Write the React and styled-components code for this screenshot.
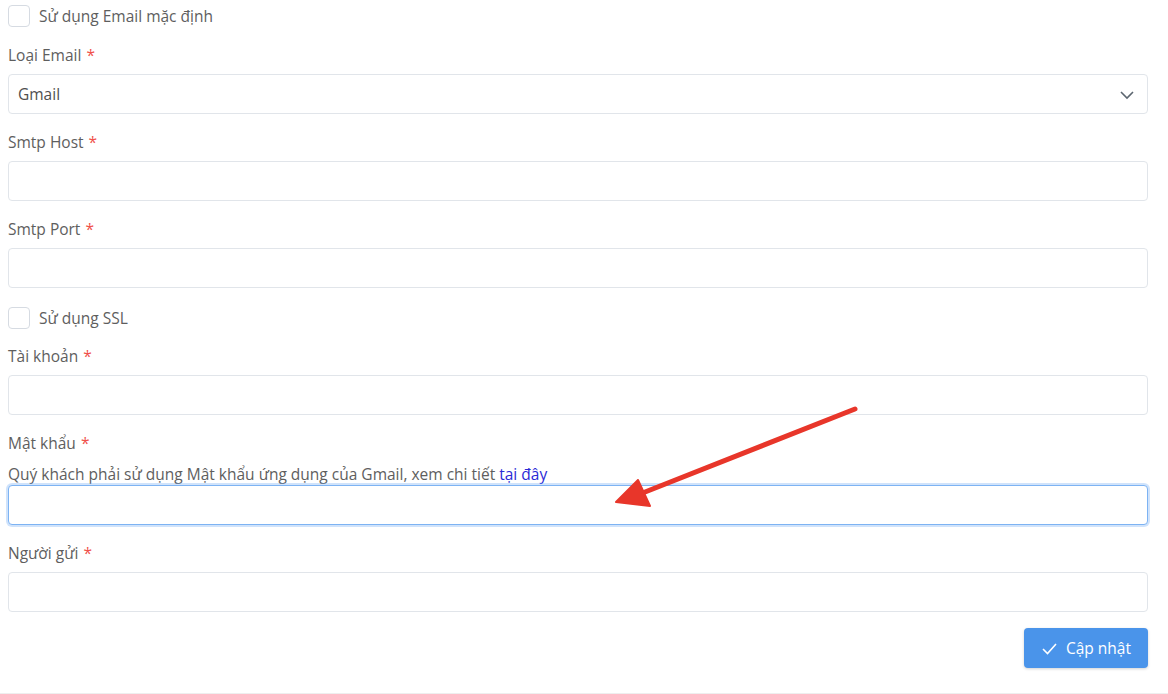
import React from 'react';
import styled, { createGlobalStyle } from 'styled-components';

const GlobalStyle = createGlobalStyle`
  html, body {
    margin: 0;
    padding: 0;
    background: #fff;
  }
  body {
    font-family: "Open Sans", "Noto Sans", sans-serif;
    font-size: 15.5px;
    color: #5e5e5e;
  }
`;

const Page = styled.div`
  position: relative;
  height: 694px;
  box-sizing: border-box;
  border-bottom: 1px solid #eeeeee;
  overflow: hidden;
`;

const Form = styled.form`
  width: 1140px;
  margin-left: 8px;
  padding-top: 4px;
  display: flex;
  flex-direction: column;
`;

const CheckRow = styled.label`
  display: flex;
  align-items: center;
  gap: 9px;
  height: 23px;
  margin-bottom: ${(p) => (p.$first ? '18px' : '17px')};
  cursor: pointer;
`;

const Box = styled.span`
  width: 22px;
  height: 22px;
  box-sizing: border-box;
  border: 1px solid #d6dbe2;
  border-radius: 4px;
  background: #fff;
`;

const Group = styled.div`
  display: flex;
  flex-direction: column;
  margin-bottom: ${(p) => (p.$last ? '16px' : '18px')};
`;

const Label = styled.div`
  line-height: 20px;
  margin-bottom: ${(p) => (p.$tight ? '0' : '9px')};
`;

const Star = styled.span`
  color: #f0504a;
  margin-left: 5px;
`;

const Hint = styled.div`
  line-height: 20px;
  margin: 11px 0 1px;
`;

const Link = styled.a`
  color: #2a2ad6;
  text-decoration: none;
`;

const Field = styled.div`
  position: relative;
  height: 40px;
  box-sizing: border-box;
  border: 1px solid ${(p) => (p.$focused ? '#7db3f3' : '#e1e5ea')};
  border-radius: 4px;
  background: #fff;
  box-shadow: ${(p) => (p.$focused ? '0 0 0 2px rgba(120, 176, 243, 0.35)' : 'none')};
  display: flex;
  align-items: center;
  padding: 0 9px;
  color: #4f4f4f;
`;

const Chevron = styled.svg`
  position: absolute;
  right: 12px;
  top: 12px;
`;

const Actions = styled.div`
  display: flex;
  justify-content: flex-end;
`;

const Button = styled.button`
  display: flex;
  align-items: center;
  gap: 8px;
  height: 40px;
  width: 124px;
  justify-content: center;
  border: none;
  border-radius: 4px;
  background: #4a94ea;
  color: #fff;
  font-family: inherit;
  font-size: 15.5px;
  box-shadow: 0 1px 3px rgba(0, 0, 0, 0.18);
`;

const Arrow = styled.svg`
  position: absolute;
  left: 0;
  top: 0;
  pointer-events: none;
`;

const fields = [
  { label: 'Smtp Host' },
  { label: 'Smtp Port' },
];

export default function App() {
  return (
    <Page>
      <GlobalStyle />
      <Form>
        <CheckRow $first>
          <Box />
          Sử dụng Email mặc định
        </CheckRow>
        <Group>
          <Label>Loại Email<Star>*</Star></Label>
          <Field>
            Gmail
            <Chevron width="16" height="16" viewBox="0 0 16 16">
              <path d="M2 5l6 6 6-6" fill="none" stroke="#5c6670" strokeWidth="1.6" />
            </Chevron>
          </Field>
        </Group>
        {fields.map((f) => (
          <Group key={f.label}>
            <Label>{f.label}<Star>*</Star></Label>
            <Field />
          </Group>
        ))}
        <CheckRow>
          <Box />
          Sử dụng SSL
        </CheckRow>
        <Group>
          <Label>Tài khoản<Star>*</Star></Label>
          <Field />
        </Group>
        <Group>
          <Label $tight>Mật khẩu<Star>*</Star></Label>
          <Hint>
            Quý khách phải sử dụng Mật khẩu ứng dụng của Gmail, xem chi tiết <Link href="#">tại đây</Link>
          </Hint>
          <Field $focused />
        </Group>
        <Group $last>
          <Label>Người gửi<Star>*</Star></Label>
          <Field />
        </Group>
        <Actions>
          <Button type="button">
            <svg width="17" height="17" viewBox="0 0 17 17">
              <path d="M2 9l4.5 4.5L15 4" fill="none" stroke="#fff" strokeWidth="1.6" />
            </svg>
            Cập nhật
          </Button>
        </Actions>
      </Form>
      <Arrow width="1168" height="694" viewBox="0 0 1168 694">
        <line x1="855" y1="409" x2="640" y2="494" stroke="#e8362a" strokeWidth="5" strokeLinecap="round" />
        <polygon points="638,480 616,502 650,506" fill="#e8362a" stroke="#e8362a" strokeWidth="2" strokeLinejoin="round" />
      </Arrow>
    </Page>
  );
}
